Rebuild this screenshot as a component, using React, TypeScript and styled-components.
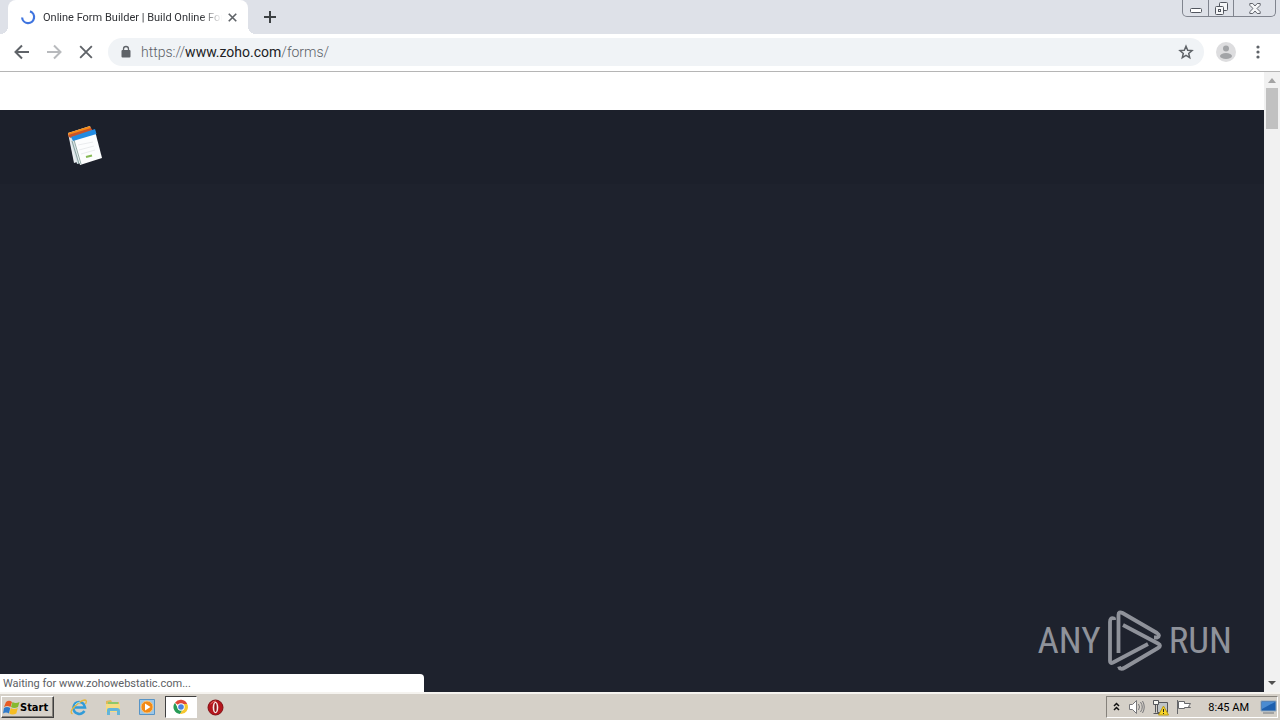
import React from 'react';
import styled, { createGlobalStyle } from 'styled-components';

const Global = createGlobalStyle`
  *, *::before, *::after { box-sizing: border-box; }
  html, body { margin: 0; }
  body { font-family: Roboto, "Noto Sans", sans-serif; font-size: 11px; color: #000; }
  button, input { font: inherit; color: inherit; margin: 0; padding: 0; border: 0; background: none; }
  svg { display: block; flex: none; }
`;

const Desktop = styled.div`
  display: flex;
  flex-direction: column;
  height: 100vh;
  overflow: hidden;
`;

const TabStrip = styled.header`
  display: flex;
  height: 34px;
  flex: none;
  background: #dee1e8;
  padding-left: 8px;
`;

const Tab = styled.div`
  position: relative;
  display: flex;
  align-items: center;
  width: 240px;
  padding: 0 8px 0 12px;
  background: #fff;
  border-radius: 8px 8px 0 0;
  &::before, &::after {
    content: "";
    position: absolute;
    bottom: 0;
    width: 8px;
    height: 8px;
  }
  &::before { left: -8px; background: radial-gradient(circle at 0 0, transparent 8px, #fff 8px); }
  &::after { right: -8px; background: radial-gradient(circle at 100% 0, transparent 8px, #fff 8px); }
`;

const TabTitle = styled.span`
  flex: 1;
  min-width: 0;
  margin: 0 2px 0 7px;
  padding-top: 2px;
  white-space: nowrap;
  line-height: 16px;
  color: #303236;
  mask-image: linear-gradient(90deg, #000 88%, transparent);
`;

const IconButton = styled.button<{ $size?: number }>`
  display: flex;
  flex: none;
  align-items: center;
  justify-content: center;
  width: ${p => p.$size ?? 28}px;
  height: ${p => p.$size ?? 28}px;
`;

const NewTab = styled(IconButton)`
  align-self: center;
  margin-left: 8px;
`;

const WindowControls = styled.div`
  display: flex;
  margin: 0 4px 0 auto;
  height: 17px;
  border: 1px solid #80848e;
  border-top: 0;
  border-radius: 0 0 5px 5px;
`;

const WindowButton = styled.button<{ $wide?: boolean }>`
  display: flex;
  align-items: center;
  justify-content: center;
  width: ${p => (p.$wide ? 42 : 25)}px;
  & + & { border-left: 1px solid #80848e; }
`;

const Toolbar = styled.nav`
  display: flex;
  align-items: center;
  flex: none;
  height: 38px;
  padding: 0 8px 1px;
  gap: 4px;
  background: #fff;
  border-bottom: 1px solid #b5b5b5;
`;

const AddressBar = styled.form`
  display: flex;
  align-items: center;
  flex: 1;
  height: 28px;
  margin: 0 4px;
  padding: 0 4px 0 12px;
  background: #f0f3f6;
  border-radius: 14px;
`;

const Address = styled.div`
  position: relative;
  flex: 1;
  margin-left: 9px;
  height: 22px;
  font-size: 14px;
  font-weight: 300;
  line-height: 22px;
`;

const AddressInput = styled.input`
  position: absolute;
  inset: 0;
  width: 100%;
  color: transparent;
  caret-color: #202124;
  outline: 0;
`;

const AddressText = styled.span`
  color: #5b6066;
  b { font-weight: 400; color: #202124; }
`;

const Viewport = styled.div`
  position: relative;
  display: flex;
  flex: 1;
  min-height: 0;
`;

const Page = styled.main`
  display: flex;
  flex-direction: column;
  flex: 1;
  background: #1e222d;
`;

const TopBanner = styled.div`
  height: 38px;
  background: #fff;
`;

const SiteHeader = styled.div`
  display: flex;
  height: 74px;
  padding: 14px 66px;
  background: #1c202b;
`;

const Scrollbar = styled.div`
  display: flex;
  flex-direction: column;
  align-items: center;
  width: 16px;
  background: #f1f1f1;
`;

const ScrollThumb = styled.div`
  width: 12px;
  height: 41px;
  margin-bottom: auto;
  background: #c1c1c1;
`;

const Status = styled.div`
  position: absolute;
  left: 0;
  bottom: 0;
  width: 424px;
  height: 18px;
  padding-left: 3px;
  background: #fff;
  border-radius: 0 4px 0 0;
  line-height: 20px;
  color: #5c6064;
`;

const Watermark = styled.div`
  position: absolute;
  right: 48px;
  bottom: 19px;
  display: flex;
  align-items: center;
  gap: 5px;
  height: 64px;
  color: #8f929a;
  font-family: "Roboto Condensed", Roboto, sans-serif;
  font-size: 37px;
  line-height: 64px;
`;

const Taskbar = styled.footer`
  display: flex;
  align-items: center;
  flex: none;
  height: 28px;
  padding: 0 1px;
  background: #d5d0c8;
  border-top: 2px solid #f5f3ef;
`;

const StartButton = styled.button`
  display: flex;
  align-items: center;
  width: 53px;
  height: 22px;
  padding-left: 1px;
  margin-right: 8px;
  border: 1px solid;
  border-color: #fff #404040 #404040 #fff;
  box-shadow: inset -1px -1px #85817b;
  font-family: "DejaVu Sans Condensed", "DejaVu Sans", sans-serif;
  font-size: 11px;
  font-weight: 700;
`;

const Task = styled.button<{ $active?: boolean }>`
  display: flex;
  align-items: center;
  justify-content: center;
  width: ${p => (p.$active ? 32 : 34)}px;
  height: 22px;
  margin: 0 ${p => (p.$active ? 1 : 0)}px;
  background: ${p => (p.$active ? '#fff' : 'none')};
  border: ${p => (p.$active ? '1px solid' : '0')};
  border-color: #404040 #fff #fff #404040;
`;

const Tray = styled.div`
  display: flex;
  align-items: center;
  gap: 6px;
  height: 22px;
  width: 172px;
  margin: 0 1px 0 auto;
  padding: 0 0 0 4px;
  border: 1px solid;
  border-color: #85817b #fff #fff #85817b;
`;

const TrayButton = styled(IconButton)`
  width: 18px;
  height: 20px;
`;

const Expand = styled(TrayButton)`
  width: 10px;
`;

const Clock = styled.time`
  margin-left: auto;
  padding-right: 4px;
  white-space: nowrap;
`;

const Arrow = ({ color, flip }: { color: string; flip?: boolean }) => (
  <svg width="20" height="20" viewBox="0 0 20 20" fill="none" stroke={color} strokeWidth="2">
    <path d={flip ? 'M3 10h13M10 3.5l6.5 6.500l-6.500 6.500' : 'M17 10H4M10 3.500L3.500 10l6.500 6.500'} />
  </svg>
);

const Cross = ({ size }: { size: number }) => (
  <svg width={size} height={size} viewBox="0 0 12 12" stroke="#5f6368" strokeWidth={size > 10 ? 1.6 : 2.2}>
    <path d="M1 1l10 10M11 1L1 11" />
  </svg>
);

const FormsLogo = () => (
  <svg width="40" height="44" viewBox="0 0 40 44">
    <path d="M2 9l22-7 1 4-14 32-3 1z" fill="#e8edf1" />
    <path d="M2 9l22-7 1 3-22 8z" fill="#f58a16" />
    <path d="M2 11l23-7 2 3-23 7z" fill="#c9532a" />
    <path d="M4 14l4-1 7 26-4 1z" fill="#d9e3e8" />
    <path d="M7 13l22-6 7 27-22 7z" fill="#fcfdfe" />
    <path d="M5 13l24-8 1.500 5-23.500 7z" fill="#218be2" />
    <path d="M6 17l7 23M8 16l7 24" stroke="#64877f" strokeWidth=".7" />
    <path d="M12 21l15-3M13 26l15-4M15 30l14-4" stroke="#e4e7ea" strokeWidth=".8" />
    <path d="M20 33l6-1.500" stroke="#86b956" strokeWidth="2.200" />
  </svg>
);

const PlayMark = () => (
  <svg width="58" height="64" viewBox="0 0 58 64" fill="none" stroke="#8f929a" strokeWidth="3.800" strokeLinejoin="round">
    <path d="M8 11V9.500Q4 8 4 13v39q0 3 3 1.500l35-18.500" />
    <path d="M12.500 44V6q0-4 4-2l34.500 20q4 2.500 0 4.500l-3 0" />
    <path d="M17 16l35 18.500q4 2.200 0 4.500L19 58.500q-5 3-6-1" />
  </svg>
);

const WindowsFlag = () => (
  <svg width="17" height="17" viewBox="0 0 17 17">
    <path d="M3 3q3-2.500 6 0L7.500 8Q4.500 6 1 8z" fill="#e75b24" />
    <path d="M9.500 3q3 2 7 0L15 8q-4 2-7 0z" fill="#86b92e" />
    <path d="M1 9q3-2 6.200 0L6 14.500q-3-2-6 0z" fill="#2f7ac9" />
    <path d="M7.800 9q3 2 7 0l-1.500 5.500q-4 2-7 0z" fill="#f6bd22" />
  </svg>
);

const ExplorerIcon = () => (
  <svg width="18" height="18" viewBox="0 0 18 18" fill="none">
    <path d="M14.500 13q-3 4-7 2.500Q3 14 3.500 9 4.500 4 9 4q5 0 6 5.500H5" stroke="#319bd8" strokeWidth="2.500" />
    <path d="M2.500 16Q-1 14 4.500 8.500 10 3 14.500 2q3 0 1 4" stroke="#e5b73d" strokeWidth="1.300" />
    <path d="M5 7q2-3 5-2.500" stroke="#90daf5" />
  </svg>
);

const FolderIcon = () => (
  <svg width="18" height="18" viewBox="0 0 18 18">
    <path d="M2 3l5-1 1 2h7v10H2z" fill="#dfb95a" />
    <path d="M4 4h10v8H4z" fill="#8ec869" />
    <path d="M2 6h14v8H2z" fill="#f5dc83" />
    <path d="M3 12q0-2 2-2h8q3 0 3 3v4h-3v-4H6v4H3z" fill="#63b5d9" />
  </svg>
);

const MediaIcon = () => (
  <svg width="18" height="18" viewBox="0 0 18 18">
    <path d="M1.500 1.500h15v15h-15z" fill="#9cc7e8" stroke="#5794c6" />
    <circle cx="9" cy="9" r="6" fill="#f28a16" stroke="#ffc575" />
    <path d="M7 5.500L12.500 9 7 12.500z" fill="#fff" />
  </svg>
);

const ChromeIcon = () => (
  <svg width="16" height="16" viewBox="0 0 16 16">
    <path d="M8 8L2 3.700A7 7 0 0 1 14.200 5H8z" fill="#df4837" />
    <path d="M8 8h-.5L5 9.500 2 3.700A7 7 0 0 0 7 15l3.500-5.500z" fill="#279b56" />
    <path d="M8 5h6.200A7 7 0 0 1 7 15l3.500-5.500z" fill="#f6c72e" />
    <circle cx="8" cy="8" r="3.700" fill="#fff" />
    <circle cx="8" cy="8" r="2.800" fill="#4a82e0" />
  </svg>
);

const OperaIcon = () => (
  <svg width="17" height="17" viewBox="0 0 17 17">
    <circle cx="8.500" cy="8.500" r="7.500" fill="#b5151d" stroke="#801014" />
    <path d="M3.500 5Q6 2 9 2" stroke="#e96c68" fill="none" />
    <ellipse cx="8.500" cy="8.500" rx="2.800" ry="5.700" fill="#f7ebe8" />
    <ellipse cx="8.500" cy="8.500" rx="1.200" ry="4.500" fill="#8e1116" />
  </svg>
);

export default function App() {
  return (
    <Desktop>
      <Global />
      <TabStrip>
        <Tab>
          <svg width="16" height="16" viewBox="0 0 16 16" fill="none" stroke="#3f74df" strokeWidth="2.200">
            <path d="M10 2.400A6 6 0 1 1 2.100 8.500" />
          </svg>
          <TabTitle>Online Form Builder | Build Online For</TabTitle>
          <IconButton $size={16} aria-label="Close tab"><Cross size={9} /></IconButton>
        </Tab>
        <NewTab aria-label="New tab">
          <svg width="12" height="12" viewBox="0 0 12 12" stroke="#3c4043" strokeWidth="2"><path d="M6 0v12M0 6h12" /></svg>
        </NewTab>
        <WindowControls>
          <WindowButton aria-label="Minimize">
            <svg width="12" height="12" viewBox="0 0 12 12" fill="#fff" stroke="#52565f"><rect x=".5" y="6.500" width="11" height="4" rx="1" /></svg>
          </WindowButton>
          <WindowButton aria-label="Restore">
            <svg width="13" height="13" viewBox="0 0 13 13" fill="#f5f6f8" stroke="#52565f">
              <rect x="4.500" y=".5" width="8" height="8" rx="1" /><rect x=".5" y="4.500" width="8" height="8" rx="1" /><rect x="3.500" y="7.500" width="2" height="2" />
            </svg>
          </WindowButton>
          <WindowButton $wide aria-label="Close">
            <svg width="12" height="11" viewBox="0 0 12 11" fill="#f5f6f8" stroke="#62656d">
              <path d="M.8.500h3L6 3 8.200.500h3v1.800L8 5.500l3.200 3.200v1.800h-3L6 8l-2.200 2.500h-3V8.700L4 5.500.8 2.300z" />
            </svg>
          </WindowButton>
        </WindowControls>
      </TabStrip>

      <Toolbar>
        <IconButton aria-label="Back"><Arrow color="#5f6368" /></IconButton>
        <IconButton aria-label="Forward"><Arrow color="#b8babd" flip /></IconButton>
        <IconButton aria-label="Stop loading"><Cross size={14} /></IconButton>
        <AddressBar>
          <svg width="12" height="14" viewBox="0 0 12 14">
            <rect x="1.500" y="5" width="9" height="7.500" rx="1" fill="#5f6368" />
            <path d="M3.500 5.500V4a2.500 2.500 0 0 1 5 0v1.500" fill="none" stroke="#5f6368" strokeWidth="1.300" />
          </svg>
          <Address>
            <AddressText>https://<b>www.zoho.com</b>/forms/</AddressText>
            <AddressInput aria-label="Address" />
          </Address>
          <IconButton type="button" aria-label="Bookmark this page">
            <svg width="16" height="16" viewBox="0 0 16 16" fill="none" stroke="#5f6368" strokeWidth="1.500">
              <path d="M8 2.200l1.700 4 4.300.4-3.300 2.800 1 4.200L8 11.400l-3.700 2.200 1-4.200L2 6.600l4.300-.4z" />
            </svg>
          </IconButton>
        </AddressBar>
        <IconButton aria-label="Profile">
          <svg width="20" height="20" viewBox="0 0 20 20">
            <circle cx="10" cy="10" r="10" fill="#dddddf" /><circle cx="10" cy="6.500" r="3" fill="#a2a4a7" /><ellipse cx="10" cy="14" rx="6" ry="3" fill="#a2a4a7" />
          </svg>
        </IconButton>
        <IconButton aria-label="Menu">
          <svg width="4" height="14" viewBox="0 0 4 14" fill="#5f6368"><circle cx="2" cy="2" r="1.600" /><circle cx="2" cy="7" r="1.600" /><circle cx="2" cy="12" r="1.600" /></svg>
        </IconButton>
      </Toolbar>

      <Viewport>
        <Page>
          <TopBanner />
          <SiteHeader><FormsLogo /></SiteHeader>
        </Page>
        <Scrollbar>
          <svg width="16" height="16" viewBox="0 0 16 16"><path d="M8 6l4 5H4z" fill="#a3a3a3" /></svg>
          <ScrollThumb />
          <svg width="16" height="17" viewBox="0 0 16 17"><path d="M4 6h8l-4 4z" fill="#505050" /></svg>
        </Scrollbar>
        <Watermark><span>ANY</span><PlayMark /><span>RUN</span></Watermark>
        <Status role="status">Waiting for www.zohowebstatic.com...</Status>
      </Viewport>

      <Taskbar>
        <StartButton><WindowsFlag />Start</StartButton>
        <Task aria-label="Internet Explorer"><ExplorerIcon /></Task>
        <Task aria-label="File Explorer"><FolderIcon /></Task>
        <Task aria-label="Media Player"><MediaIcon /></Task>
        <Task $active aria-label="Chrome"><ChromeIcon /></Task>
        <Task aria-label="Opera"><OperaIcon /></Task>
        <Tray>
          <Expand aria-label="Show hidden icons">
            <svg width="7" height="10" viewBox="0 0 7 10" fill="none" stroke="#111" strokeWidth="1.500"><path d="M1 4l2.500-2.500L6 4M1 8l2.500-2.500L6 8" /></svg>
          </Expand>
          <TrayButton aria-label="Volume">
            <svg width="17" height="16" viewBox="0 0 17 16" fill="none" stroke="#77777a">
              <path d="M1.500 5.500h3l4-4v13l-4-4h-3z" fill="#fff" /><path d="M10.500 5q2 3 0 6M12.500 3q3.500 5 0 10M14.500 2q3.500 6 0 12" />
            </svg>
          </TrayButton>
          <TrayButton aria-label="Network">
            <svg width="17" height="17" viewBox="0 0 17 17" fill="#f7f7f2" stroke="#55565a">
              <path d="M5.500 3.500h10v10h-10z" fill="#bfc4c6" /><path d="M1.500 1.500h5v4h-5zM3.500 5.500v8M1.500 14.500h6" />
              <path d="M11.500 7l5 9h-10z" fill="#f8d528" stroke="#b99a16" /><path d="M11.500 10v3M11.500 14v1" stroke="#222" />
            </svg>
          </TrayButton>
          <TrayButton aria-label="Action Center">
            <svg width="17" height="16" viewBox="0 0 17 16" fill="#fff" stroke="#66676a"><path d="M1.500 1v14M2.500 2.500h6v2h6l-2 3 2 1h-6v1h-6z" /></svg>
          </TrayButton>
          <Clock>8:45 AM</Clock>
          <TrayButton aria-label="Show desktop">
            <svg width="17" height="14" viewBox="0 0 17 14"><path d="M1 1h15v10H1z" fill="#1d5fae" stroke="#8fa7bd" /><path d="M2 2h13L2 9z" fill="#4a8bd1" /><path d="M3 13h11" stroke="#70767e" /></svg>
          </TrayButton>
        </Tray>
      </Taskbar>
    </Desktop>
  );
}
